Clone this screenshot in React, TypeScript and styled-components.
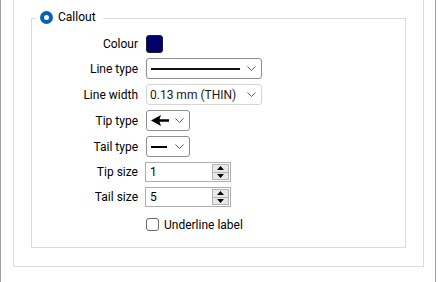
import React from 'react';
import styled, { createGlobalStyle } from 'styled-components';

const GlobalStyle = createGlobalStyle`
  html, body {
    margin: 0;
    padding: 0;
    background: #ffffff;
    overflow: hidden;
  }
  body {
    font-family: Roboto, "Liberation Sans", Arial, sans-serif;
    font-size: 12px;
    color: #000000;
  }
`;

const Page = styled.div`
  box-sizing: border-box;
  width: 436px;
  height: 282px;
  border-left: 1px solid #a0a0a0;
  border-right: 1px solid #a0a0a0;
`;

const OuterFrame = styled.div`
  box-sizing: border-box;
  width: 411px;
  height: 267px;
  margin-left: 12px;
  padding: 18px 0 0 17px;
  border: 1px solid #dcdcdc;
  border-top: none;
`;

const GroupBox = styled.div`
  position: relative;
  box-sizing: border-box;
  width: 375px;
  height: 230px;
  border: 1px solid #dcdcdc;
  padding-top: 16px;
`;

const Legend = styled.div`
  position: absolute;
  top: -11px;
  left: 4px;
  height: 18px;
  display: flex;
  align-items: center;
  gap: 5px;
  padding: 0 7px 0 4px;
  background: #ffffff;
  font-size: 12px;
`;

const Radio = styled.span`
  position: relative;
  width: 13px;
  height: 13px;
  border-radius: 50%;
  background: #0063b8;

  &::after {
    content: '';
    position: absolute;
    left: 4px;
    top: 4px;
    width: 5px;
    height: 5px;
    border-radius: 50%;
    background: #ffffff;
  }
`;

const Form = styled.div`
  display: grid;
  grid-template-columns: 106px auto;
  column-gap: 8px;
  row-gap: 5px;
  align-items: center;
  justify-items: start;
`;

const Label = styled.div`
  justify-self: end;
  white-space: nowrap;
`;

const Swatch = styled.div`
  box-sizing: border-box;
  width: 17px;
  height: 18px;
  border: 1px solid #202030;
  border-radius: 3px;
  background: #00006a;
`;

const Combo = styled.div<{ $w: number; $light?: boolean }>`
  box-sizing: border-box;
  width: ${(p) => p.$w}px;
  height: 21px;
  display: flex;
  align-items: center;
  justify-content: space-between;
  padding: 0 5px 0 4px;
  border: 1px solid ${(p) => (p.$light ? '#d6d6d6' : '#8f8f8f')};
  border-radius: 3px;
  background: #ffffff;
`;

const ComboText = styled.span`
  margin-left: -1px;
  color: #1a1a1a;
`;

const Spinner = styled.div`
  box-sizing: border-box;
  width: 86px;
  height: 20px;
  margin-left: -1px;
  display: flex;
  align-items: stretch;
  border: 1px solid #adadad;
  background: #ffffff;
`;

const SpinValue = styled.span`
  flex: 1;
  display: flex;
  align-items: center;
  padding-left: 4px;
  color: #000000;
`;

const SpinButtons = styled.div`
  width: 17px;
  margin: 1px 1px 1px 0;
  display: flex;
  flex-direction: column;
`;

const SpinButton = styled.div`
  flex: 1;
  display: flex;
  align-items: center;
  justify-content: center;
  box-sizing: border-box;
  border: 1px solid #b4b4b4;
  background: #e8e8e8;

  & + & {
    border-top: none;
  }
`;

const CheckRow = styled.label`
  grid-column: 2;
  display: flex;
  align-items: center;
  gap: 5px;
  margin-top: 6px;
  height: 13px;
`;

const CheckBox = styled.span`
  box-sizing: border-box;
  width: 13px;
  height: 13px;
  border: 1px solid #6a6a6a;
  border-radius: 3px;
  background: #ffffff;
`;

const Chevron = () => (
  <svg width="9" height="5" viewBox="0 0 9 5">
    <path d="M0.5 0.5 L4.5 4.5 L8.5 0.5" fill="none" stroke="#5a5a5a" strokeWidth="1" />
  </svg>
);

const Triangle = ({ up }: { up?: boolean }) => (
  <svg width="7" height="4" viewBox="0 0 7 4">
    <path d={up ? 'M0 4 L3.5 0 L7 4 Z' : 'M0 0 L3.5 4 L7 0 Z'} fill="#000000" />
  </svg>
);

const App = () => {
  return (
    <Page>
      <GlobalStyle />
      <OuterFrame>
        <GroupBox>
          <Legend>
            <Radio />
            <span>Callout</span>
          </Legend>
          <Form>
            <Label>Colour</Label>
            <Swatch />

            <Label>Line type</Label>
            <Combo $w={116}>
              <svg width="89" height="2" viewBox="0 0 89 2">
                <rect x="0" y="0" width="89" height="2" fill="#111111" />
              </svg>
              <Chevron />
            </Combo>

            <Label>Line width</Label>
            <Combo $w={116} $light>
              <ComboText>0.13 mm (THIN)</ComboText>
              <Chevron />
            </Combo>

            <Label>Tip type</Label>
            <Combo $w={44}>
              <svg width="18" height="11" viewBox="0 0 18 11">
                <path d="M0 5.5 L10 0 L8.5 4.3 L18 4.3 L18 6.7 L8.5 6.7 L10 11 Z" fill="#000000" />
              </svg>
              <Chevron />
            </Combo>

            <Label>Tail type</Label>
            <Combo $w={44}>
              <svg width="16" height="2" viewBox="0 0 16 2">
                <rect x="0" y="0" width="16" height="2" fill="#000000" />
              </svg>
              <Chevron />
            </Combo>

            <Label>Tip size</Label>
            <Spinner>
              <SpinValue>1</SpinValue>
              <SpinButtons>
                <SpinButton>
                  <Triangle up />
                </SpinButton>
                <SpinButton>
                  <Triangle />
                </SpinButton>
              </SpinButtons>
            </Spinner>

            <Label>Tail size</Label>
            <Spinner>
              <SpinValue>5</SpinValue>
              <SpinButtons>
                <SpinButton>
                  <Triangle up />
                </SpinButton>
                <SpinButton>
                  <Triangle />
                </SpinButton>
              </SpinButtons>
            </Spinner>

            <CheckRow>
              <CheckBox />
              <span>Underline label</span>
            </CheckRow>
          </Form>
        </GroupBox>
      </OuterFrame>
    </Page>
  );
};

export default App;
